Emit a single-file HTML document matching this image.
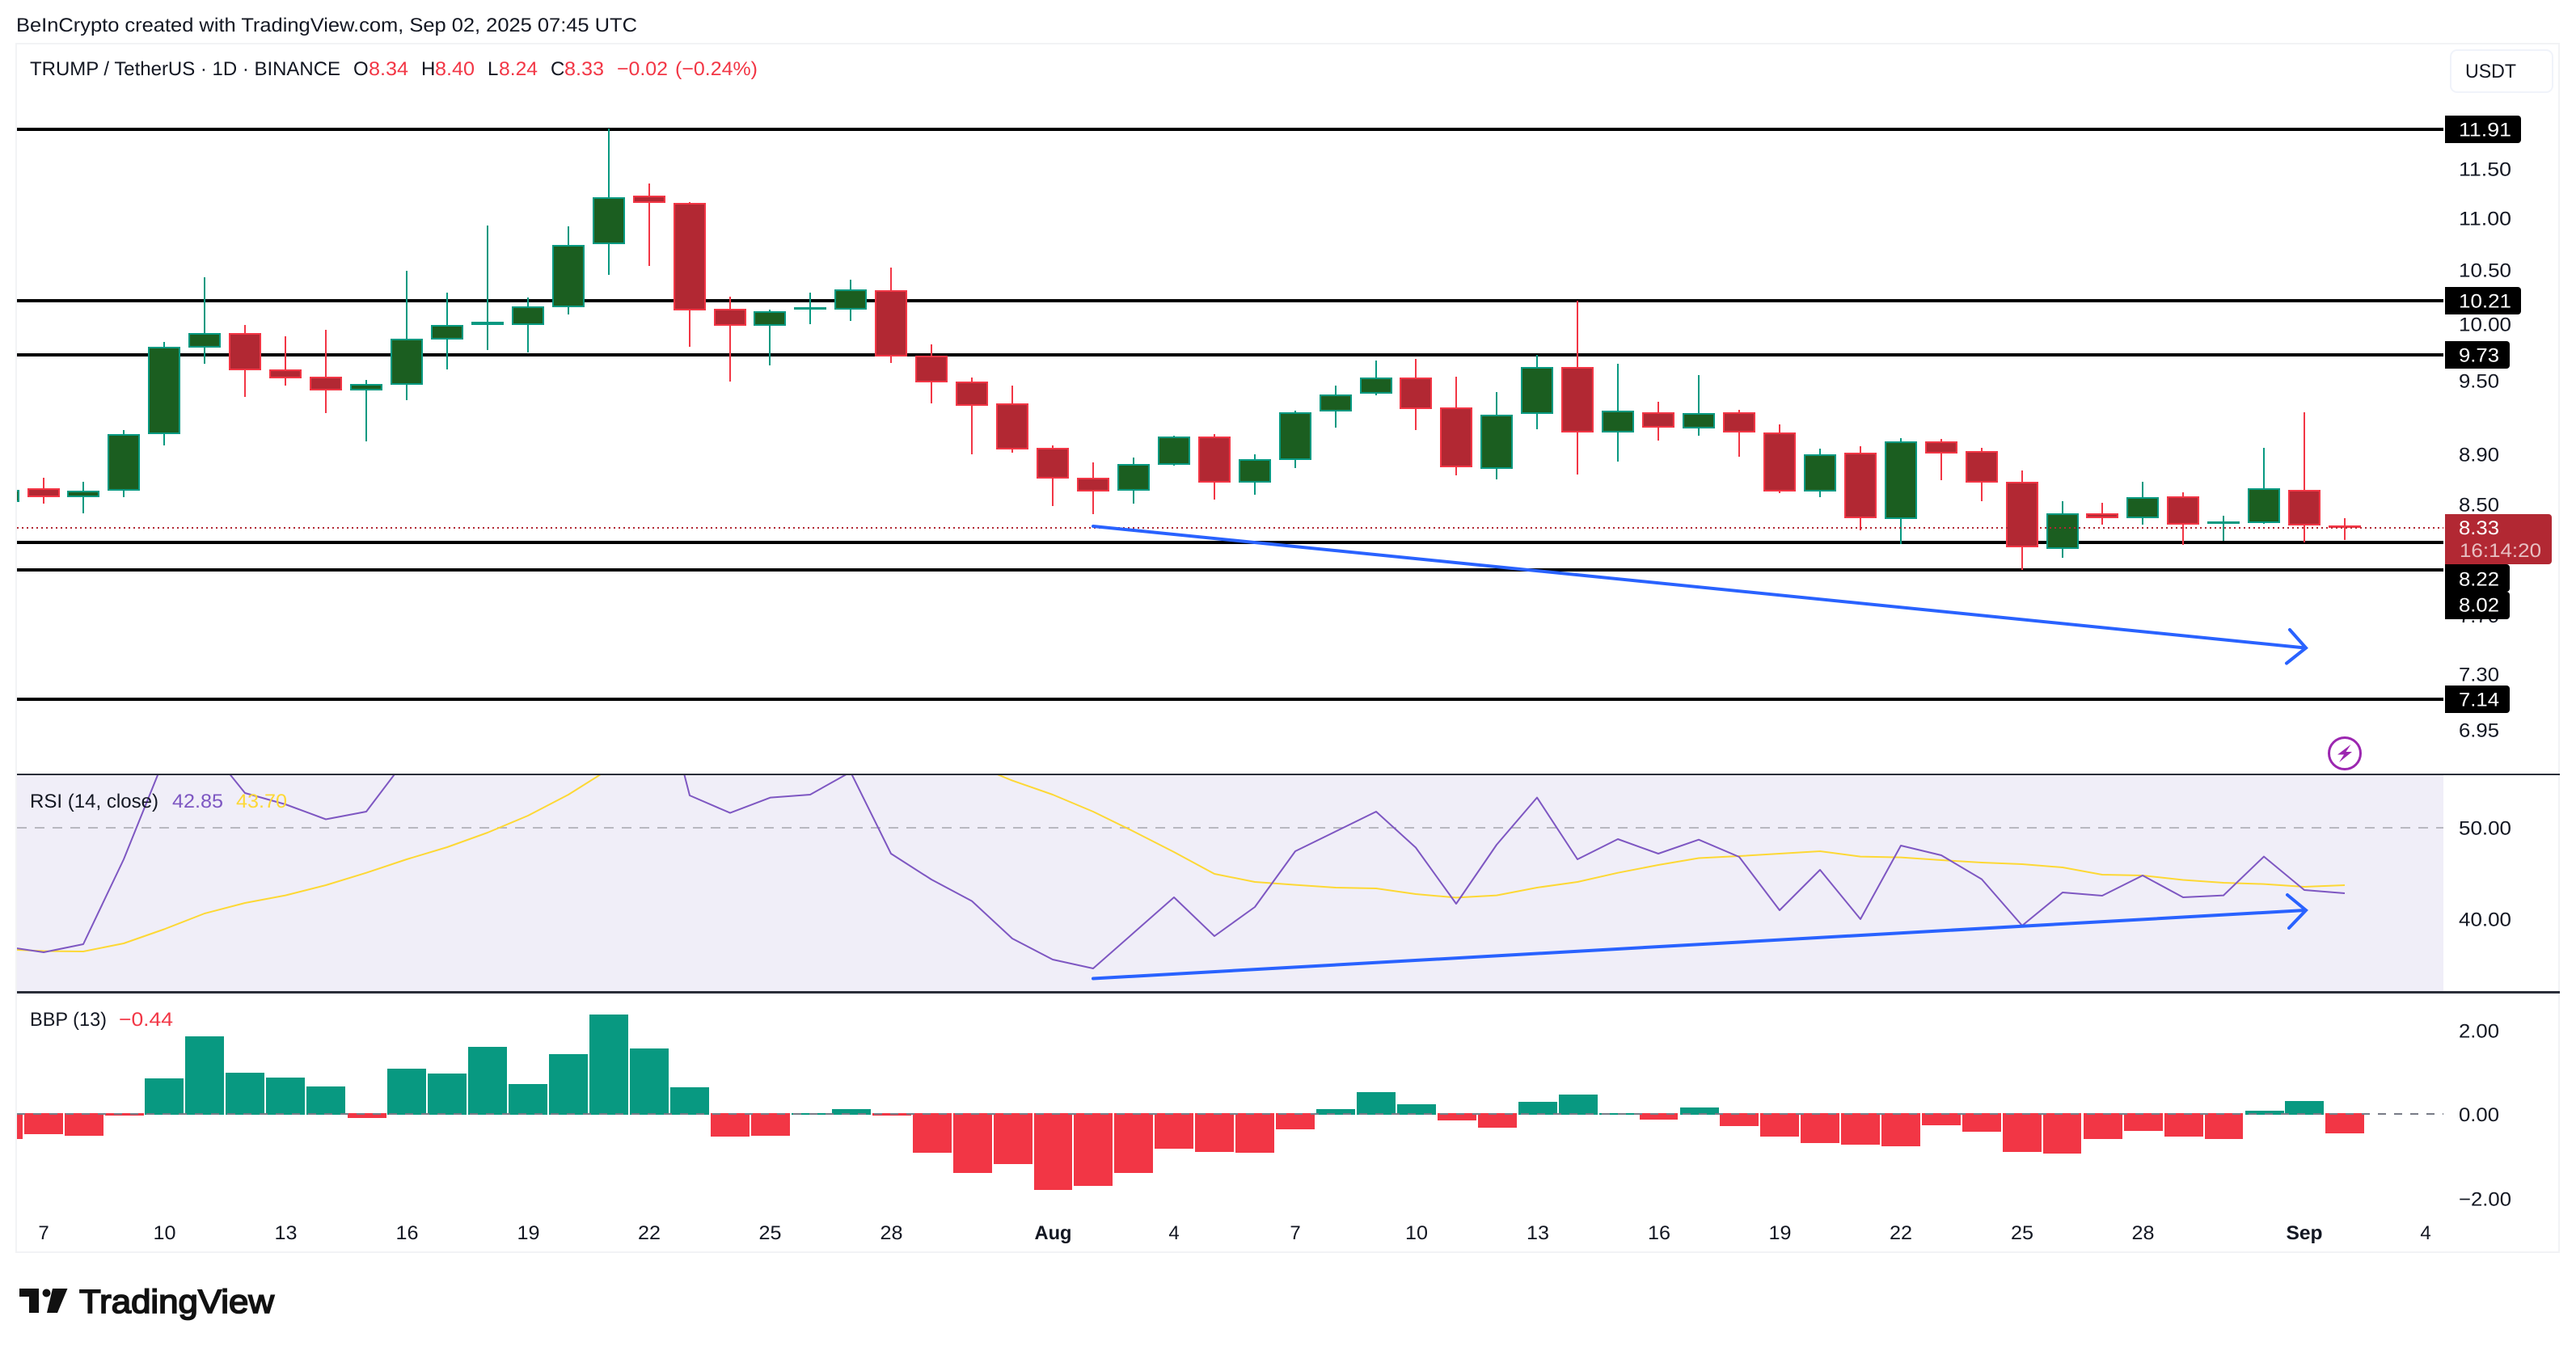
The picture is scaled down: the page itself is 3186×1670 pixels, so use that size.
<!DOCTYPE html>
<html lang="en">
<head>
<meta charset="utf-8">
<title>TRUMP / TetherUS chart</title>
<style>
html,body{margin:0;padding:0;background:#fff;width:3186px;height:1670px;overflow:hidden}
svg{display:block}
text{font-family:"Liberation Sans",sans-serif;font-size:24px;fill:#131722;text-rendering:geometricPrecision}
.r{fill:#F23645}
.w{fill:#fff}
.c{shape-rendering:crispEdges}
</style>
</head>
<body>
<svg width="3186" height="1670" viewBox="0 0 3186 1670" xmlns="http://www.w3.org/2000/svg">
<defs>
<clipPath id="plot"><rect x="21" y="55" width="3001" height="1494"/></clipPath>
<clipPath id="rsi"><rect x="21" y="959" width="3001" height="267"/></clipPath>
</defs>
<rect width="3186" height="1670" fill="#fff"/>
<text x="20" y="39" textLength="768" lengthAdjust="spacingAndGlyphs">BeInCrypto created with TradingView.com, Sep 02, 2025 07:45 UTC</text>

<!-- frame -->
<rect class="c" x="20" y="54" width="3145" height="1495" fill="none" stroke="#F2F3F5" stroke-width="2"/>

<!-- RSI pane -->
<rect class="c" x="21" y="958" width="3001" height="268" fill="#F0EEF8"/>
<path d="M21 1024H3022" stroke="#B8B8C0" stroke-width="2" stroke-dasharray="12 10" fill="none"/>

<!-- horizontal levels -->
<g class="c" fill="#000">
<rect x="21" y="158" width="3001" height="4"/>
<rect x="21" y="370" width="3001" height="4"/>
<rect x="21" y="437" width="3001" height="4"/>
<rect x="21" y="669" width="3001" height="4"/>
<rect x="21" y="703" width="3001" height="4"/>
<rect x="21" y="863" width="3001" height="4"/>
</g>

<g clip-path="url(#plot)">
<!-- green wicks -->
<path class="c" stroke="#089981" stroke-width="2" fill="none" d="M103 596V635M153 532V615M203 423V551M253 343V450M453 470V546M503 335V495M553 362V457M603 279V433M653 368V436M703 280V389M753 159V340M952 383V452M1002 362V401M1052 346V397M1402 566V623M1452 539V576M1552 562V612M1602 508V579M1652 477V529M1702 446V489M1851 485V593M1901 439V531M2001 450V571M2101 464V539M2251 555V615M2351 542V673M2551 620V690M2650 596V649M2750 638V669M2800 554V648"/>
<!-- red wicks -->
<path class="c" stroke="#F23645" stroke-width="2" fill="none" d="M54 591V623M303 402V491M353 416V477M403 408V511M803 227V329M853 250V429M903 367V472M1102 331V449M1152 426V499M1202 467V562M1252 477V560M1302 551V626M1352 572V636M1502 537V618M1751 444V532M1801 466V588M1951 372V587M2051 497V545M2151 507V565M2201 525V610M2301 552V656M2401 543V594M2451 554V620M2501 582V705M2600 622V649M2700 609V674M2850 510V671M2900 641V668"/>
<!-- green bodies -->
<g class="c" fill="#1B5E20" stroke="#089981" stroke-width="2">
<rect x="-15" y="607" width="38" height="13"/>
<rect x="84" y="608" width="38" height="6"/>
<rect x="134" y="538" width="38" height="68"/>
<rect x="184" y="430" width="38" height="106"/>
<rect x="234" y="413" width="38" height="16"/>
<rect x="434" y="476" width="38" height="6"/>
<rect x="484" y="420" width="38" height="55"/>
<rect x="534" y="403" width="38" height="16"/>
<rect x="634" y="380" width="38" height="21"/>
<rect x="684" y="304" width="38" height="75"/>
<rect x="734" y="245" width="38" height="56"/>
<rect x="933" y="386" width="38" height="16"/>
<rect x="1033" y="359" width="38" height="23"/>
<rect x="1383" y="575" width="38" height="31"/>
<rect x="1433" y="541" width="38" height="33"/>
<rect x="1533" y="569" width="38" height="27"/>
<rect x="1583" y="511" width="38" height="57"/>
<rect x="1633" y="489" width="38" height="19"/>
<rect x="1683" y="468" width="38" height="18"/>
<rect x="1832" y="514" width="38" height="65"/>
<rect x="1882" y="455" width="38" height="56"/>
<rect x="1982" y="509" width="38" height="25"/>
<rect x="2082" y="512" width="38" height="17"/>
<rect x="2232" y="563" width="38" height="44"/>
<rect x="2332" y="547" width="38" height="94"/>
<rect x="2532" y="636" width="38" height="42"/>
<rect x="2631" y="616" width="38" height="24"/>
<rect x="2781" y="605" width="38" height="41"/>
</g>
<g class="c" fill="#089981">
<rect x="583" y="398" width="40" height="4"/>
<rect x="982" y="380" width="40" height="3"/>
<rect x="2730" y="645" width="40" height="3"/>
</g>
<!-- red bodies -->
<g class="c" fill="#B22833" stroke="#F23645" stroke-width="2">
<rect x="35" y="605" width="38" height="9"/>
<rect x="284" y="413" width="38" height="44"/>
<rect x="334" y="458" width="38" height="9"/>
<rect x="384" y="467" width="38" height="15"/>
<rect x="784" y="243" width="38" height="7"/>
<rect x="834" y="252" width="38" height="131"/>
<rect x="884" y="383" width="38" height="19"/>
<rect x="1083" y="360" width="38" height="80"/>
<rect x="1133" y="441" width="38" height="31"/>
<rect x="1183" y="473" width="38" height="28"/>
<rect x="1233" y="500" width="38" height="55"/>
<rect x="1283" y="555" width="38" height="36"/>
<rect x="1333" y="592" width="38" height="15"/>
<rect x="1483" y="541" width="38" height="55"/>
<rect x="1732" y="468" width="38" height="37"/>
<rect x="1782" y="505" width="38" height="72"/>
<rect x="1932" y="455" width="38" height="79"/>
<rect x="2032" y="511" width="38" height="17"/>
<rect x="2132" y="511" width="38" height="23"/>
<rect x="2182" y="536" width="38" height="71"/>
<rect x="2282" y="561" width="38" height="79"/>
<rect x="2382" y="547" width="38" height="13"/>
<rect x="2432" y="559" width="38" height="37"/>
<rect x="2482" y="597" width="38" height="79"/>
<rect x="2581" y="636" width="38" height="4"/>
<rect x="2681" y="615" width="38" height="33"/>
<rect x="2831" y="607" width="38" height="42"/>
</g>
<rect class="c" x="2880" y="650" width="40" height="3" fill="#F23645"/>
<!-- price line -->
<path class="c" d="M21 653H3022" stroke="#B22833" stroke-width="2" stroke-dasharray="2 4" fill="none"/>
</g>

<!-- downward arrow -->
<g fill="none" stroke="#2962FF" stroke-width="4" stroke-linecap="round" stroke-linejoin="miter">
<path d="M1352 651L2851 801.5"/>
<path d="M2832 779L2852 801.5L2828 820.5"/>
</g>

<!-- lightning -->
<circle cx="2900" cy="932" r="19.5" fill="none" stroke="#9C27B0" stroke-width="3"/>
<polygon points="2907.5,921 2891,933.5 2899,933.5 2893,943 2909,930 2901.5,930" fill="#9C27B0"/>

<!-- RSI lines -->
<g clip-path="url(#rsi)" fill="none" stroke-width="2" stroke-linejoin="round">
<polyline stroke="#FDD835" points="20,1175 54,1176.5 103,1177 153,1167 203,1149.5 253,1130 303,1117 353,1107.6 403,1095 453,1079.7 503,1063 553,1048 603,1030 653,1009 703,983 753,951.6 803,910 853,880 903,870 953,870 1002,880 1052,890 1102,900 1152,925 1202,945 1252,965.6 1302,983 1352,1004 1402,1028.5 1452,1054 1502,1081 1552,1091 1602,1094.6 1652,1098 1702,1099 1751,1106 1801,1110.4 1851,1107.6 1901,1098 1951,1091 2001,1079.7 2051,1070 2101,1061.5 2151,1059 2201,1056 2251,1053 2301,1059.6 2351,1060.6 2401,1064 2451,1067 2501,1069 2551,1073 2600,1082 2650,1083 2700,1088.5 2750,1092 2800,1093.6 2850,1097 2900,1095"/>
<polyline stroke="#7E57C2" points="20,1173 54,1178 103,1168 153,1063 203,939 253,919 303,981 353,995 403,1013.5 453,1004 503,938 553,900 603,880 653,870 703,860 753,800 803,790 853,984 903,1005.6 953,986.6 1002,983 1052,955 1102,1056 1152,1088 1202,1114.6 1252,1161 1302,1187 1352,1198 1402,1154 1452,1110 1502,1158 1552,1122 1602,1053 1652,1028.5 1702,1004 1751,1048.5 1801,1118 1851,1045 1901,986.6 1951,1063 2001,1038 2051,1056 2101,1038.7 2151,1060 2201,1126 2251,1076 2301,1137 2351,1046 2401,1058 2451,1087.6 2501,1145 2551,1104 2600,1108 2650,1083 2700,1110 2750,1107.6 2800,1059.6 2850,1101 2900,1105"/>
</g>

<!-- RSI arrow -->
<g fill="none" stroke="#2962FF" stroke-width="4" stroke-linecap="round">
<path d="M1352 1210.5L2851 1126"/>
<path d="M2829 1107L2852 1126L2831 1148"/>
</g>

<!-- separators -->
<rect class="c" x="21" y="957" width="3145" height="2" fill="#2A2E39"/>
<rect class="c" x="21" y="1226" width="3145" height="3" fill="#2A2E39"/>

<!-- BBP green -->
<g class="c" fill="#089981">
<rect x="179" y="1334" width="48" height="45"/>
<rect x="229" y="1282" width="48" height="97"/>
<rect x="279" y="1327" width="48" height="52"/>
<rect x="329" y="1333" width="48" height="46"/>
<rect x="379" y="1344" width="48" height="35"/>
<rect x="479" y="1322" width="48" height="57"/>
<rect x="529" y="1328" width="48" height="51"/>
<rect x="579" y="1295" width="48" height="84"/>
<rect x="629" y="1341" width="48" height="38"/>
<rect x="679" y="1304" width="48" height="75"/>
<rect x="729" y="1255" width="48" height="124"/>
<rect x="779" y="1297" width="48" height="82"/>
<rect x="829" y="1345" width="48" height="34"/>
<rect x="979" y="1377" width="48" height="2"/>
<rect x="1029" y="1372" width="48" height="7"/>
<rect x="1628" y="1372" width="48" height="7"/>
<rect x="1678" y="1351" width="48" height="28"/>
<rect x="1728" y="1366" width="48" height="13"/>
<rect x="1878" y="1363" width="48" height="16"/>
<rect x="1928" y="1354" width="48" height="25"/>
<rect x="1978" y="1377" width="48" height="2"/>
<rect x="2078" y="1370" width="48" height="9"/>
<rect x="2777" y="1374" width="48" height="5"/>
<rect x="2826" y="1362" width="48" height="17"/>
</g>
<!-- BBP red -->
<g class="c" fill="#F23645">
<rect x="21" y="1377" width="7" height="32"/>
<rect x="30" y="1377" width="48" height="26"/>
<rect x="80" y="1377" width="48" height="28"/>
<rect x="130" y="1377" width="48" height="3"/>
<rect x="430" y="1377" width="48" height="6"/>
<rect x="879" y="1377" width="48" height="29"/>
<rect x="929" y="1377" width="48" height="28"/>
<rect x="1079" y="1377" width="48" height="3"/>
<rect x="1129" y="1377" width="48" height="49"/>
<rect x="1179" y="1377" width="48" height="74"/>
<rect x="1229" y="1377" width="48" height="63"/>
<rect x="1279" y="1377" width="47" height="95"/>
<rect x="1328" y="1377" width="48" height="90"/>
<rect x="1378" y="1377" width="48" height="74"/>
<rect x="1428" y="1377" width="48" height="44"/>
<rect x="1478" y="1377" width="48" height="48"/>
<rect x="1528" y="1377" width="48" height="49"/>
<rect x="1578" y="1377" width="48" height="20"/>
<rect x="1778" y="1377" width="48" height="9"/>
<rect x="1828" y="1377" width="48" height="18"/>
<rect x="2028" y="1377" width="47" height="8"/>
<rect x="2127" y="1377" width="48" height="16"/>
<rect x="2177" y="1377" width="48" height="29"/>
<rect x="2227" y="1377" width="48" height="37"/>
<rect x="2277" y="1377" width="48" height="39"/>
<rect x="2327" y="1377" width="48" height="41"/>
<rect x="2377" y="1377" width="48" height="15"/>
<rect x="2427" y="1377" width="48" height="23"/>
<rect x="2477" y="1377" width="48" height="48"/>
<rect x="2527" y="1377" width="47" height="50"/>
<rect x="2577" y="1377" width="48" height="32"/>
<rect x="2627" y="1377" width="48" height="22"/>
<rect x="2677" y="1377" width="48" height="29"/>
<rect x="2727" y="1377" width="47" height="32"/>
<rect x="2876" y="1377" width="48" height="25"/>
</g>
<path d="M21 1378H3022" stroke="#787B86" stroke-width="2" stroke-dasharray="10 10" fill="none"/>

<!-- Legends -->
<text x="37" y="93" textLength="384" lengthAdjust="spacingAndGlyphs">TRUMP / TetherUS · 1D · BINANCE</text>
<text x="437" y="93">O</text><text class="r" x="456" y="93" textLength="49" lengthAdjust="spacingAndGlyphs">8.34</text>
<text x="521" y="93">H</text><text class="r" x="538" y="93" textLength="49" lengthAdjust="spacingAndGlyphs">8.40</text>
<text x="603" y="93">L</text><text class="r" x="617" y="93" textLength="48" lengthAdjust="spacingAndGlyphs">8.24</text>
<text x="681" y="93">C</text><text class="r" x="698" y="93" textLength="49" lengthAdjust="spacingAndGlyphs">8.33</text>
<text class="r" x="763" y="93" textLength="63" lengthAdjust="spacingAndGlyphs">−0.02</text>
<text class="r" x="835" y="93" textLength="102" lengthAdjust="spacingAndGlyphs">(−0.24%)</text>

<text x="37" y="999" textLength="159" lengthAdjust="spacingAndGlyphs">RSI (14, close)</text>
<text x="213" y="999" textLength="63" lengthAdjust="spacingAndGlyphs" style="fill:#7E57C2">42.85</text>
<text x="292" y="999" textLength="63" lengthAdjust="spacingAndGlyphs" style="fill:#FDD835">43.70</text>

<text x="37" y="1269" textLength="95" lengthAdjust="spacingAndGlyphs">BBP (13)</text>
<text class="r" x="147" y="1269" textLength="67" lengthAdjust="spacingAndGlyphs">−0.44</text>

<!-- USDT -->
<rect x="3031" y="62" width="126" height="52" rx="8" fill="#fff" stroke="#F0F3FA" stroke-width="2"/>
<text x="3049" y="96" textLength="63" lengthAdjust="spacingAndGlyphs">USDT</text>

<!-- Price axis labels -->
<g>
<text x="3041" y="217.5" textLength="65" lengthAdjust="spacingAndGlyphs">11.50</text>
<text x="3041" y="278.5" textLength="65" lengthAdjust="spacingAndGlyphs">11.00</text>
<text x="3041" y="342.5" textLength="65" lengthAdjust="spacingAndGlyphs">10.50</text>
<text x="3041" y="409.5" textLength="65" lengthAdjust="spacingAndGlyphs">10.00</text>
<text x="3041" y="479.5" textLength="50" lengthAdjust="spacingAndGlyphs">9.50</text>
<text x="3041" y="570.5" textLength="50" lengthAdjust="spacingAndGlyphs">8.90</text>
<text x="3041" y="632.5" textLength="50" lengthAdjust="spacingAndGlyphs">8.50</text>
<text x="3041" y="770" textLength="50" lengthAdjust="spacingAndGlyphs">7.70</text>
<text x="3041" y="842.5" textLength="50" lengthAdjust="spacingAndGlyphs">7.30</text>
<text x="3041" y="911.5" textLength="50" lengthAdjust="spacingAndGlyphs">6.95</text>
<text x="3041" y="1032.5" textLength="65" lengthAdjust="spacingAndGlyphs">50.00</text>
<text x="3041" y="1145.5" textLength="65" lengthAdjust="spacingAndGlyphs">40.00</text>
<text x="3041" y="1283.5" textLength="50" lengthAdjust="spacingAndGlyphs">2.00</text>
<text x="3041" y="1387" textLength="50" lengthAdjust="spacingAndGlyphs">0.00</text>
<text x="3041" y="1491.5" textLength="65" lengthAdjust="spacingAndGlyphs">−2.00</text>
</g>

<!-- Black price tags -->
<path d="M3024 143H3114a4 4 0 0 1 4 4V173a4 4 0 0 1-4 4H3024Z" fill="#000"/>
<text class="w" x="3041" y="168.5" textLength="65" lengthAdjust="spacingAndGlyphs">11.91</text>
<path d="M3024 355H3114a4 4 0 0 1 4 4V385a4 4 0 0 1-4 4H3024Z" fill="#000"/>
<text class="w" x="3041" y="380.5" textLength="65" lengthAdjust="spacingAndGlyphs">10.21</text>
<path d="M3024 422H3100a4 4 0 0 1 4 4V452a4 4 0 0 1-4 4H3024Z" fill="#000"/>
<text class="w" x="3041" y="447.5" textLength="50" lengthAdjust="spacingAndGlyphs">9.73</text>

<path d="M3024 636H3152a4 4 0 0 1 4 4V694a4 4 0 0 1-4 4H3024Z" fill="#B22833"/>
<text class="w" x="3041" y="661" textLength="50" lengthAdjust="spacingAndGlyphs">8.33</text>
<text x="3042" y="689" textLength="101" lengthAdjust="spacingAndGlyphs" style="fill:#fff;fill-opacity:.7">16:14:20</text>

<path d="M3024 698H3100a4 4 0 0 1 4 4V728a4 4 0 0 1-4 4H3024Z" fill="#000"/>
<text class="w" x="3041" y="724.5" textLength="50" lengthAdjust="spacingAndGlyphs">8.22</text>
<path d="M3024 732H3100a4 4 0 0 1 4 4V762a4 4 0 0 1-4 4H3024Z" fill="#000"/>
<text class="w" x="3041" y="756.5" textLength="50" lengthAdjust="spacingAndGlyphs">8.02</text>
<path d="M3024 848H3100a4 4 0 0 1 4 4V878a4 4 0 0 1-4 4H3024Z" fill="#000"/>
<text class="w" x="3041" y="873.5" textLength="50" lengthAdjust="spacingAndGlyphs">7.14</text>

<!-- Time axis -->
<g text-anchor="middle">
<text x="54" y="1533">7</text>
<text x="203.5" y="1533" textLength="28" lengthAdjust="spacingAndGlyphs">10</text>
<text x="353.5" y="1533" textLength="28" lengthAdjust="spacingAndGlyphs">13</text>
<text x="503.5" y="1533" textLength="28" lengthAdjust="spacingAndGlyphs">16</text>
<text x="653.5" y="1533" textLength="28" lengthAdjust="spacingAndGlyphs">19</text>
<text x="803" y="1533" textLength="28" lengthAdjust="spacingAndGlyphs">22</text>
<text x="952.5" y="1533" textLength="28" lengthAdjust="spacingAndGlyphs">25</text>
<text x="1102.5" y="1533" textLength="28" lengthAdjust="spacingAndGlyphs">28</text>
<text x="1302.5" y="1533" textLength="46" lengthAdjust="spacingAndGlyphs" font-weight="700">Aug</text>
<text x="1452" y="1533">4</text>
<text x="1602" y="1533">7</text>
<text x="1752" y="1533" textLength="28" lengthAdjust="spacingAndGlyphs">10</text>
<text x="1902" y="1533" textLength="28" lengthAdjust="spacingAndGlyphs">13</text>
<text x="2052" y="1533" textLength="28" lengthAdjust="spacingAndGlyphs">16</text>
<text x="2201.5" y="1533" textLength="28" lengthAdjust="spacingAndGlyphs">19</text>
<text x="2351" y="1533" textLength="28" lengthAdjust="spacingAndGlyphs">22</text>
<text x="2501" y="1533" textLength="28" lengthAdjust="spacingAndGlyphs">25</text>
<text x="2650.5" y="1533" textLength="28" lengthAdjust="spacingAndGlyphs">28</text>
<text x="2850" y="1533" textLength="45" lengthAdjust="spacingAndGlyphs" font-weight="700">Sep</text>
<text x="3000" y="1533">4</text>
</g>

<!-- Logo -->
<g fill="#111">
<path d="M24 1594H48V1624H36V1604H24Z"/>
<circle cx="57.5" cy="1599.5" r="5"/>
<path d="M65 1594H83.5L71 1624H58Z"/>
</g>
<text x="98" y="1624" textLength="241" lengthAdjust="spacingAndGlyphs" style="font-size:41px;fill:#111;stroke:#111;stroke-width:1.7px">TradingView</text>
</svg>
</body>
</html>
